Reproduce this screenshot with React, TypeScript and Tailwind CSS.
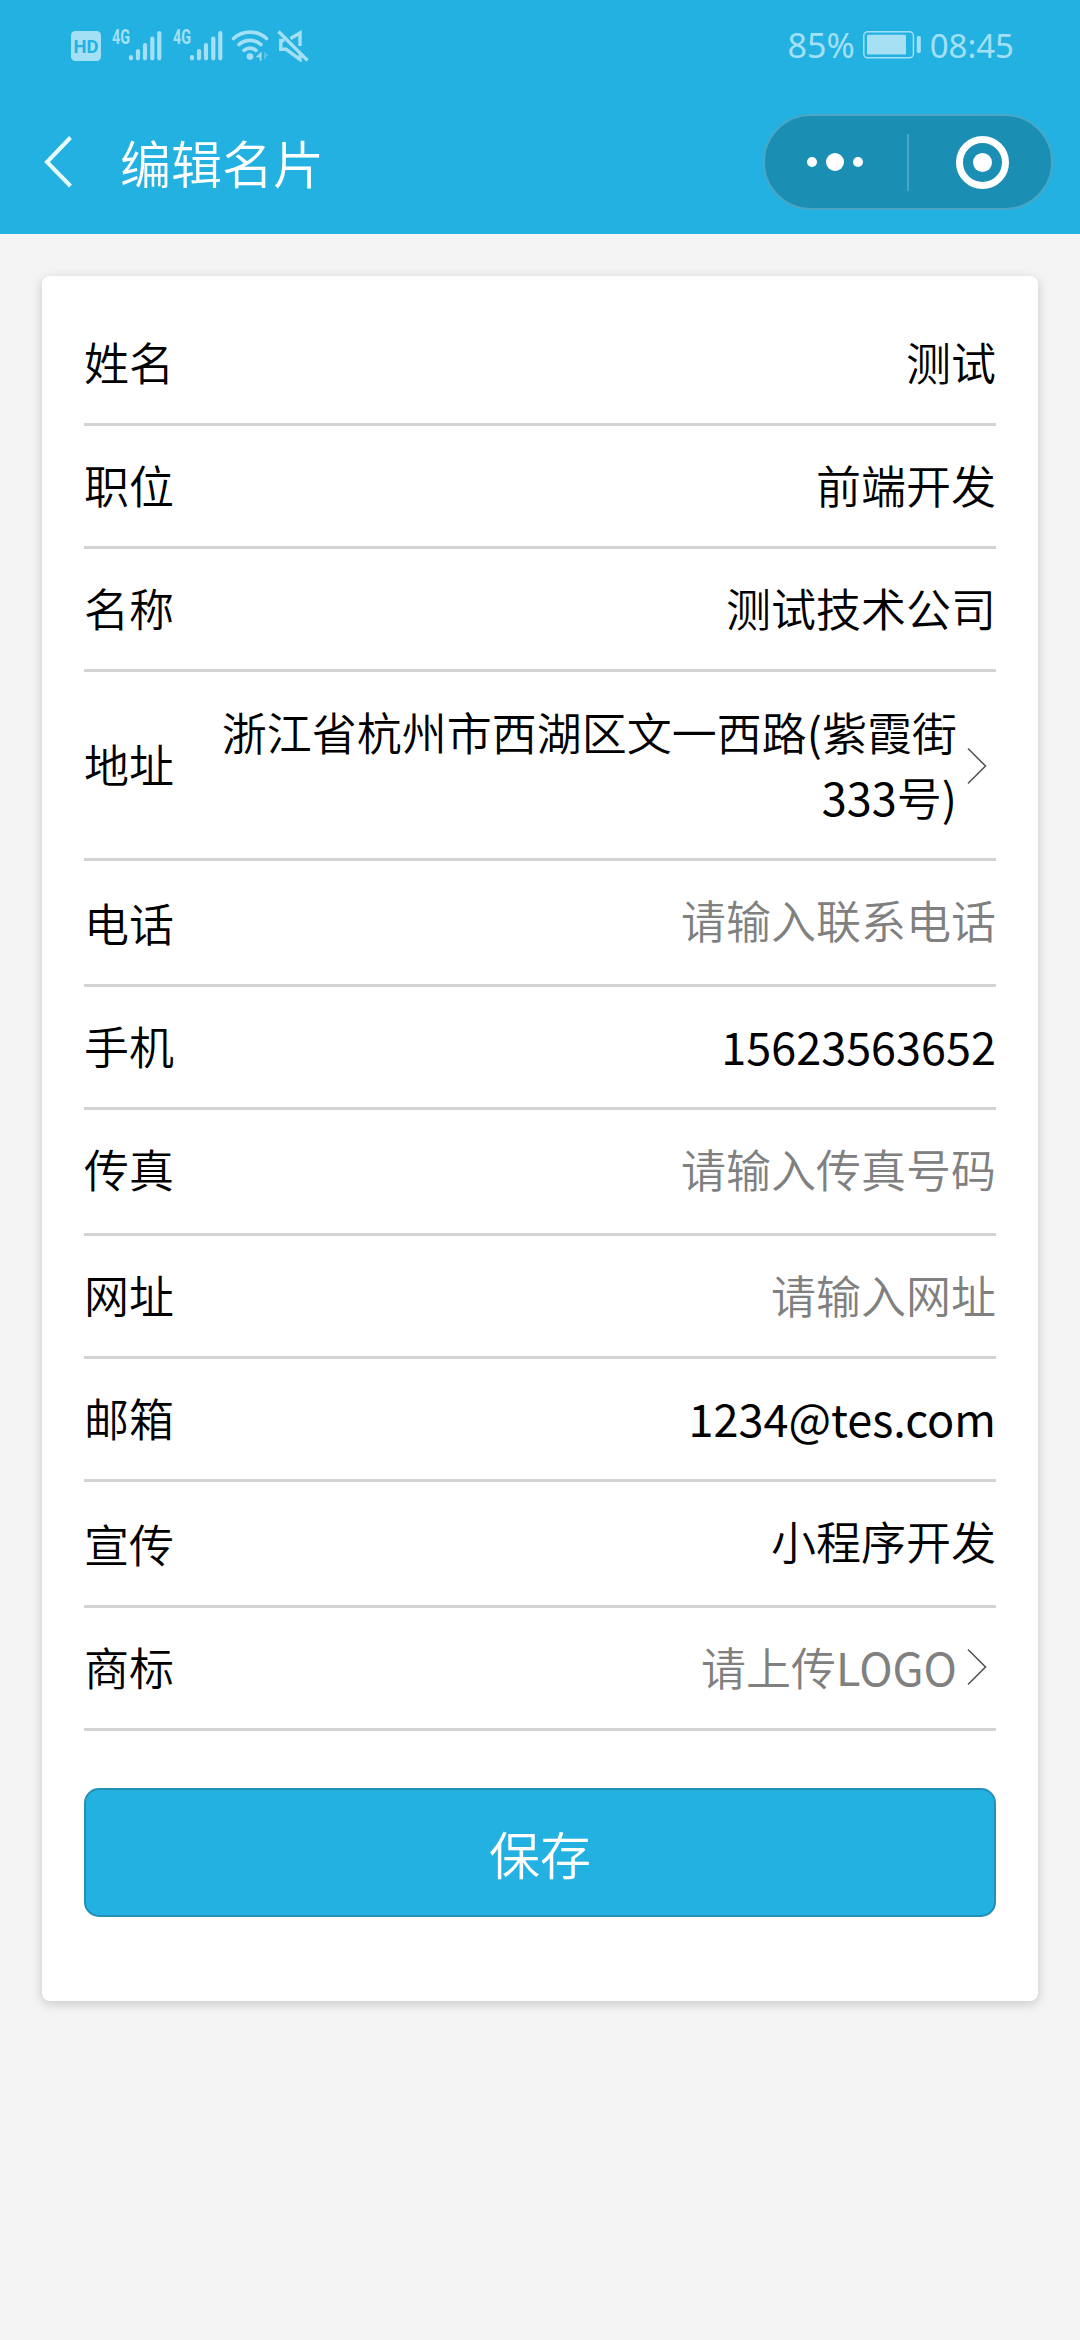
import { clsx } from 'clsx';

type Field = {
  label: string;
  value?: string;
  placeholder?: string;
  arrow?: boolean;
  rowClass: string;
  labelClass?: string;
  arrowClass?: string;
};

const fields: Field[] = [
  { label: '姓名', value: '测试', rowClass: 'h-[123px] pb-[3px]' },
  { label: '职位', value: '前端开发', rowClass: 'h-[123px] pb-[3px]' },
  { label: '名称', value: '测试技术公司', rowClass: 'h-[123px] pb-[3px]' },
  {
    label: '地址',
    value: '浙江省杭州市西湖区文一西路(紫霞街333号)',
    arrow: true,
    rowClass: 'h-[189px] pb-[3px]',
    arrowClass: 'mt-[4px]',
  },
  { label: '电话', placeholder: '请输入联系电话', rowClass: 'h-[126px] pb-[6px]', labelClass: 'mt-[6px]' },
  { label: '手机', value: '15623563652', rowClass: 'h-[123px] pb-[3px]' },
  { label: '传真', placeholder: '请输入传真号码', rowClass: 'h-[126px] pb-[6px]' },
  { label: '网址', placeholder: '请输入网址', rowClass: 'h-[123px] pb-[3px]' },
  { label: '邮箱', value: '1234@tes.com', rowClass: 'h-[123px] pb-[3px]' },
  { label: '宣传', value: '小程序开发', rowClass: 'h-[126px] pb-[6px]', labelClass: 'mt-[6px]' },
  { label: '商标', placeholder: '请上传LOGO', arrow: true, rowClass: 'h-[123px] pb-[3px]' },
];

function Signal() {
  return (
    <svg width="50" height="44" viewBox="0 -8 50 44">
      <text
        x="0"
        y="16.5"
        fill="currentColor"
        fontFamily="Roboto, sans-serif"
        fontWeight="700"
        fontSize="20"
        textLength="18"
        lengthAdjust="spacingAndGlyphs"
      >
        4G
      </text>
      <g stroke="currentColor" strokeWidth="4.2" strokeLinecap="round">
        <path d="M19 30v1.3M26 24v7.3M33 18v13.3M40.3 11.5v19.8M47.3 6v25.3" />
      </g>
    </svg>
  );
}

function StatusBar() {
  return (
    <div className="flex h-[92px] items-center pr-[66px] pl-[71px] leading-none font-normal text-[#a3e0f5]">
      <svg width="30" height="30" viewBox="0 0 30 30">
        <rect width="30" height="30" rx="4.5" fill="currentColor" />
        <text
          x="2.5"
          y="21.7"
          fill="#22b1e1"
          fontFamily="Roboto, sans-serif"
          fontWeight="700"
          fontSize="19"
          textLength="25"
          lengthAdjust="spacingAndGlyphs"
        >
          HD
        </text>
      </svg>
      <div className="mb-[10px] ml-[11px] flex gap-[11px]">
        <Signal />
        <Signal />
      </div>
      <svg width="38" height="32" viewBox="0 0 38 32" className="mb-[2px] ml-2">
        <g fill="none" stroke="currentColor" strokeWidth="3.6" strokeLinecap="round">
          <path d="M2.5 9.5a24.5 24.5 0 0 1 33 0" />
          <path d="M8 15.6a16.5 16.5 0 0 1 22 0" />
          <path d="M13 21.3a9.5 9.5 0 0 1 12 0" />
        </g>
        <circle cx="19" cy="27.5" r="3.3" fill="currentColor" />
        <path d="M30.5 22.5v9h-1.8v-3.3h-4z" fill="currentColor" />
        <path d="M33 22.5l4 3.5-4 5z" fill="currentColor" opacity="0.4" />
      </svg>
      <svg width="32" height="34" viewBox="0 0 32 34" className="mb-[2px] ml-2">
        <g fill="none" stroke="currentColor" strokeWidth="3.4">
          <path d="M1.5 3.5l29 29" />
          <path d="M7.5 12.5H3.8v8.8h5.4L23 31.5v-5" />
          <path d="M13.5 10.5L23 5v13" />
        </g>
      </svg>
      <div className="ml-auto flex items-center pb-[2px] font-['Noto_Sans',sans-serif]">
        <span className="text-[34px]">85%</span>
        <svg width="58" height="28" viewBox="0 0 58 28" className="mr-[9px] ml-[8px]">
          <rect x="0.8" y="0.8" width="49.6" height="26" rx="4" fill="none" stroke="currentColor" strokeWidth="1.5" />
          <rect x="4" y="3.7" width="39" height="19.8" rx="1" fill="#a8e0f3" />
          <rect x="53.8" y="5" width="4" height="17" rx="1.5" fill="currentColor" />
        </svg>
        <span className="text-[33px]">08:45</span>
      </div>
    </div>
  );
}

function NavBar() {
  return (
    <div className="flex h-[142px] items-center pr-[27px] pb-[2px] pl-[43px]">
      <svg width="30" height="54" viewBox="0 0 30 54" fill="none" stroke="#e9fbff" strokeWidth="4">
        <path d="M27.5 2.5L4 27l23.5 24" />
      </svg>
      <h1 className="ml-[47px] text-[51px] leading-[74px] font-[350] text-white">编辑名片</h1>
      <div className="ml-auto flex h-24 w-[290px] items-center rounded-full border-2 border-[#4ba6c5] bg-[#1b8eb4]">
        <div className="flex w-[142px] items-center justify-center gap-[9px] pr-[2px]">
          <span className="size-[10px] rounded-full bg-white" />
          <span className="size-[18px] rounded-full bg-white" />
          <span className="size-[10px] rounded-full bg-white" />
        </div>
        <span className="h-[57px] w-[2px] bg-[#4ba6c5]" />
        <div className="flex flex-1 items-center justify-center pl-[5px]">
          <span className="flex size-[53px] items-center justify-center rounded-full border-[7px] border-white">
            <span className="size-[19px] rounded-full bg-white" />
          </span>
        </div>
      </div>
    </div>
  );
}

// Latin runs are set one step heavier than the Chinese glyphs
function MixedText({ text }: { text: string }) {
  return text.split(/([\x21-\x7e]+)/).map((part, i) =>
    i % 2 ? (
      <span key={i} className="font-normal">
        {part}
      </span>
    ) : (
      part
    ),
  );
}

function FieldRow({ label, value, placeholder, arrow, rowClass, labelClass, arrowClass }: Field) {
  return (
    <div className={clsx('flex items-center border-b-[3px] border-[#d3d3d3]', rowClass)}>
      <span className={clsx('w-[135px] shrink-0', labelClass)}>{label}</span>
      <span className={clsx('flex-1 text-right break-all', !value && 'text-[#808080]')}>
        <MixedText text={value ?? placeholder ?? ''} />
      </span>
      {arrow && (
        <svg
          width="20"
          height="38"
          viewBox="0 0 20 38"
          className={clsx('mr-[9px] ml-[10px] shrink-0', arrowClass)}
          fill="none"
          stroke="#555"
          strokeWidth="1.6"
        >
          <path d="M1 1.5L18.5 19 1 36.5" />
        </svg>
      )}
    </div>
  );
}

export default function App() {
  return (
    <div className="min-h-[2340px] w-[1080px] bg-[#f4f4f4] font-['Noto_Sans_CJK_SC',sans-serif] text-[45px] leading-[65px] font-[350] text-black">
      <header className="h-[234px] bg-[#22b1e1]">
        <StatusBar />
        <NavBar />
      </header>
      <main className="px-[42px] pt-[42px]">
        <form className="h-[1725px] rounded-lg bg-white px-[42px] pt-[27px] shadow-[0_3px_12px_rgba(0,0,0,0.18)]">
          {fields.map((field) => (
            <FieldRow key={field.label} {...field} />
          ))}
          <button
            type="button"
            className="mt-[57px] h-[129px] w-full rounded-[15px] border-2 border-[#2390b5] bg-[#22b1e1] pt-[2px] text-[51px] text-white"
          >
            保存
          </button>
        </form>
      </main>
    </div>
  );
}
